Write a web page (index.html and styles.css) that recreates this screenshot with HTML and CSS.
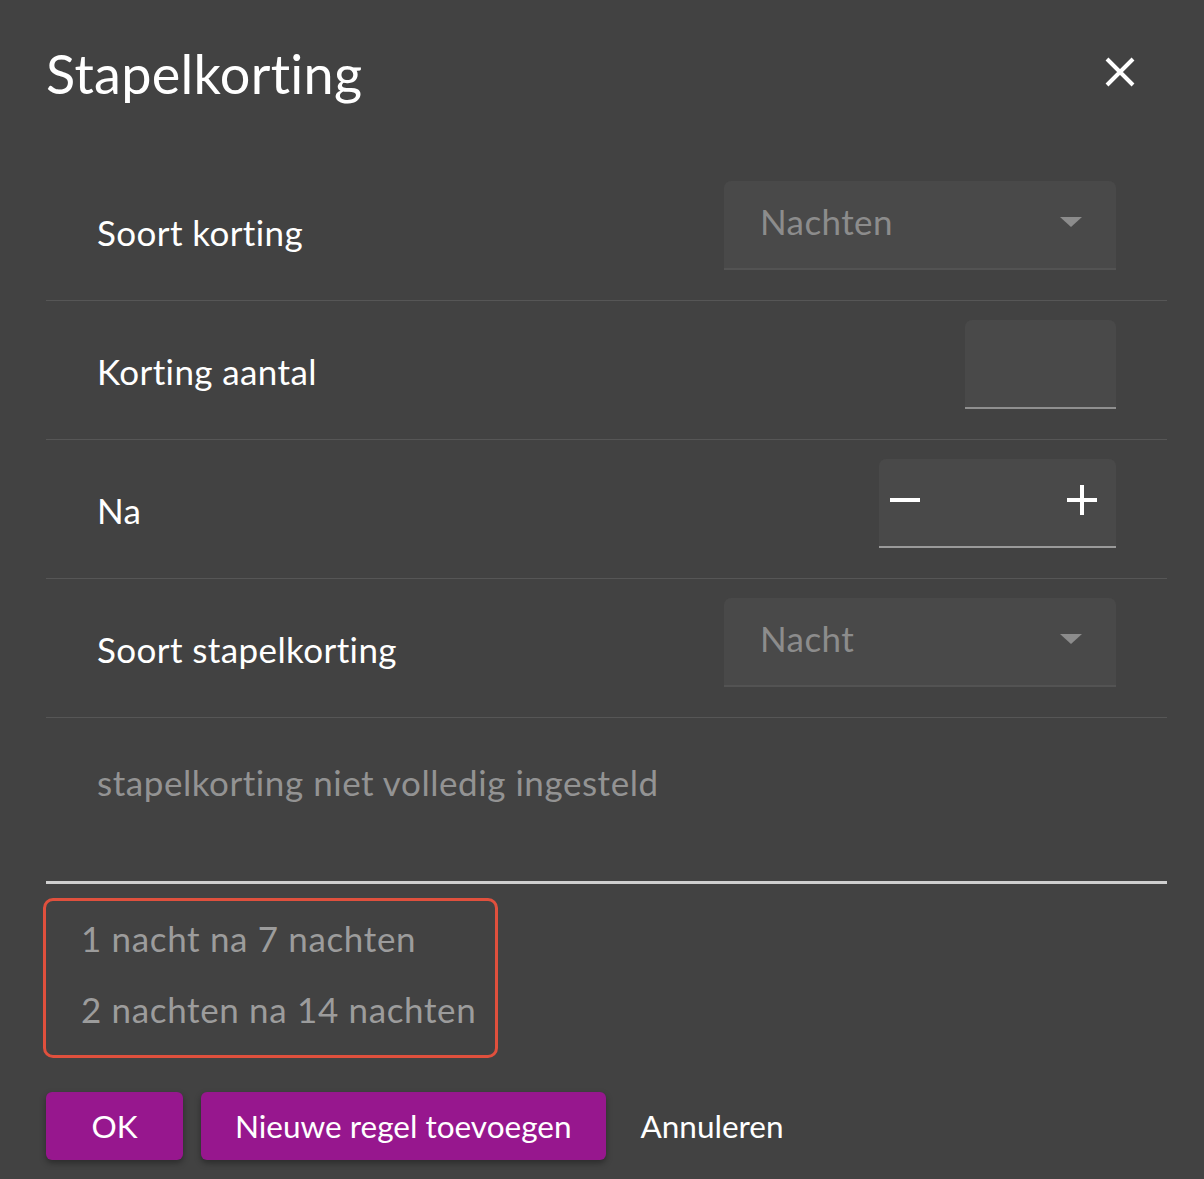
FILE: index.html
```html
<!DOCTYPE html>
<html lang="nl">
<head>
<meta charset="utf-8">
<title>Stapelkorting</title>
<link rel="stylesheet" href="styles.css">
</head>
<body>
<div class="dialog">
  <header class="header">
    <h1 class="title">Stapelkorting</h1>
    <button class="close" aria-label="Sluiten">
      <svg width="30" height="30" viewBox="0 0 30 30"><path d="M2 2 L28 28 M28 2 L2 28" stroke="#fff" stroke-width="4" stroke-linecap="butt"/></svg>
    </button>
  </header>

  <div class="row">
    <span class="label">Soort korting</span>
    <div class="field select">
      <span class="value">Nachten</span>
      <span class="caret"></span>
    </div>
  </div>

  <div class="row">
    <span class="label">Korting aantal</span>
    <div class="field input"></div>
  </div>

  <div class="row">
    <span class="label">Na</span>
    <div class="field stepper">
      <svg width="32" height="32" viewBox="0 0 32 32"><path d="M1 16 H31" stroke="#fff" stroke-width="4"/></svg>
      <svg width="32" height="32" viewBox="0 0 32 32"><path d="M1 16 H31 M16 1 V31" stroke="#fff" stroke-width="4"/></svg>
    </div>
  </div>

  <div class="row">
    <span class="label">Soort stapelkorting</span>
    <div class="field select">
      <span class="value">Nacht</span>
      <span class="caret"></span>
    </div>
  </div>

  <div class="message">stapelkorting niet volledig ingesteld</div>

  <div class="summary">
    <div class="summary-line">1 nacht na 7 nachten</div>
    <div class="summary-line">2 nachten na 14 nachten</div>
  </div>

  <div class="actions">
    <button class="btn primary ok">OK</button>
    <button class="btn primary">Nieuwe regel toevoegen</button>
    <button class="btn text">Annuleren</button>
  </div>
</div>
</body>
</html>
```
FILE: styles.css
```css
html, body {
  margin: 0;
  padding: 0;
  background: #424242;
}
body {
  font-family: Lato, "Noto Sans", sans-serif;
  color: #ffffff;
  width: 1204px;
  height: 1179px;
  overflow: hidden;
}
.dialog {
  padding: 0 37px 0 46px;
}
.header {
  height: 162px;
  display: flex;
  align-items: flex-start;
  justify-content: space-between;
}
.title {
  margin: 42px 0 0 0;
  font-size: 54px;
  font-weight: 400;
  line-height: 64px;
  letter-spacing: 0.3px;
}
.close {
  margin: 57px 32px 0 0;
  padding: 0;
  background: none;
  border: 0;
  width: 30px;
  height: 30px;
  display: block;
}
.close svg { display: block; }
.row {
  height: 138px;
  border-bottom: 1px solid #565656;
  display: flex;
  align-items: center;
  justify-content: space-between;
  padding: 0 51px;
}
.label {
  font-size: 35px;
  letter-spacing: 0.4px;
  margin-top: 1px;
}
.field {
  height: 89px;
  box-sizing: border-box;
  background: #494949;
  border-radius: 7px 7px 0 0;
  margin-bottom: 11px;
}
.select {
  width: 392px;
  border-bottom: 2px solid #535353;
  display: flex;
  align-items: center;
  justify-content: space-between;
  padding: 0 34px 8px 36px;
}
.value {
  font-size: 35px;
  letter-spacing: 0.4px;
  color: #8c8c8c;
}
.caret {
  width: 0;
  height: 0;
  border-left: 11px solid transparent;
  border-right: 11px solid transparent;
  border-top: 10px solid #8c8c8c;
  margin-top: 3px;
}
.input {
  width: 151px;
  border-bottom: 2px solid #8f8f8f;
}
.stepper {
  width: 237px;
  border-bottom: 2px solid #9a9a9a;
  display: flex;
  align-items: center;
  justify-content: space-between;
  padding: 0 18px 6px 10px;
}
.stepper svg { display: block; }
.message {
  height: 166px;
  box-sizing: border-box;
  border-bottom: 3px solid #cfcfcf;
  padding: 43px 0 0 51px;
  font-size: 35px;
  letter-spacing: 0.55px;
  color: #939393;
}
.summary {
  margin: 14px 0 0 -3px;
  width: 455px;
  height: 160px;
  box-sizing: border-box;
  border: 3px solid #e0503d;
  border-radius: 10px;
  padding: 17px 0 0 35px;
}
.summary-line {
  font-size: 35px;
  letter-spacing: 0.65px;
  color: #9c9c9c;
  line-height: 41px;
  margin-bottom: 30px;
}
.actions {
  margin-top: 34px;
  display: flex;
  align-items: center;
  gap: 18px;
}
.btn {
  font-family: Lato, "Noto Sans", sans-serif;
  font-size: 31.5px;
  height: 68px;
  border: 0;
  border-radius: 6px;
  color: #ffffff;
  padding: 0 34px;
}
.primary {
  background: #97178e;
  box-shadow: 0 3px 6px rgba(0, 0, 0, 0.35);
}
.ok {
  width: 137px;
  padding: 0;
}
.text {
  background: none;
  padding: 0 17px;
}
```
